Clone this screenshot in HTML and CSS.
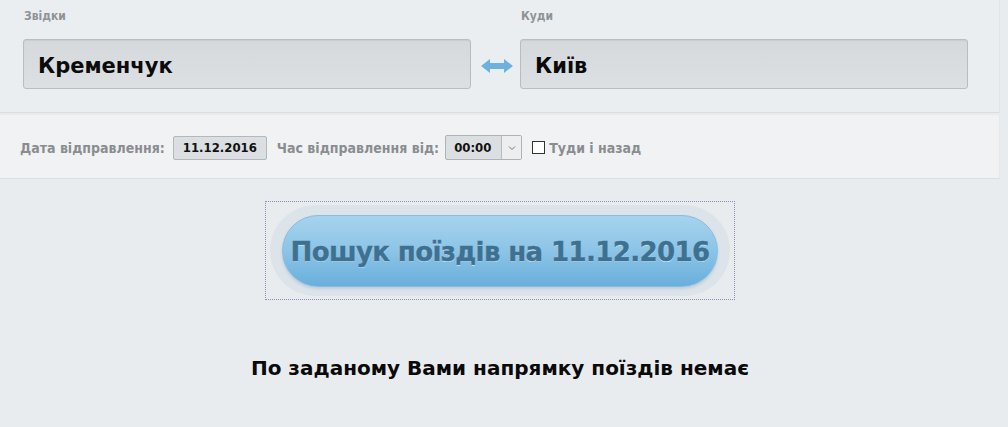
FILE: index.html
```html
<!DOCTYPE html>
<html lang="uk">
<head>
<meta charset="utf-8">
<title>Пошук поїздів</title>
<link rel="stylesheet" href="styles.css">
</head>
<body>
<div class="page">
  <div class="route">
    <div class="field">
      <div class="label">Звідки</div>
      <div class="station">Кременчук</div>
    </div>
    <div class="swap">
      <svg width="32" height="16" viewBox="0 0 32 16"><path d="M0 8 L9 1 V5 H23 V1 L32 8 L23 15 V11 H9 V15 Z" fill="#6db2de"/></svg>
    </div>
    <div class="field">
      <div class="label">Куди</div>
      <div class="station">Київ</div>
    </div>
  </div>
  <div class="options">
    <span class="opt-label">Дата відправлення:</span>
    <span class="date">11.12.2016</span>
    <span class="opt-label">Час відправлення від:</span>
    <span class="select"><span class="select-value">00:00</span><span class="select-btn"><svg width="8" height="6" viewBox="0 0 8 6"><path d="M1 1.5 L4 4.5 L7 1.5" fill="none" stroke="#777" stroke-width="1"/></svg></span></span>
    <span class="check"><span class="box"></span><span class="opt-label">Туди і назад</span></span>
  </div>
  <div class="search-wrap">
    <div class="search-focus">
      <div class="search-halo">
        <div class="search-btn">Пошук поїздів на 11.12.2016</div>
      </div>
    </div>
  </div>
  <div class="message">По заданому Вами напрямку поїздів немає</div>
</div>
</body>
</html>
```
FILE: styles.css
```css
html, body {
  margin: 0;
  padding: 0;
  background: #e9ecef;
  height: 100%;
}
body {
  font-family: "DejaVu Sans", Verdana, sans-serif;
}
.page {
  width: 1000px;
}
.route {
  display: flex;
  align-items: flex-end;
  padding: 8px 0 23px 23px;
  background: #ebeef1;
  border-right: 1px solid #e2e5e8;
  border-bottom: 1px solid #dadee1;
}
.field {
  width: 448px;
}
.label {
  font-family: "DejaVu Sans Condensed", "DejaVu Sans", sans-serif;
  font-weight: bold;
  font-size: 12px;
  color: #8f9396;
  height: 16px;
  line-height: 16px;
  padding-left: 1px;
  margin-bottom: 15px;
}
.station {
  box-sizing: border-box;
  height: 50px;
  border: 1px solid #b9bdc1;
  border-radius: 3px;
  background: linear-gradient(#d6d9dc, #dde0e3);
  box-shadow: inset 0 1px 1px rgba(0,0,0,0.06);
  font-weight: bold;
  font-size: 21px;
  line-height: 52px;
  color: #0b0b0b;
  padding-left: 14px;
}
.swap {
  width: 49px;
  height: 50px;
  display: flex;
  align-items: center;
  justify-content: center;
  padding-left: 2px;
  padding-top: 4px;
  box-sizing: border-box;
}
.options {
  display: flex;
  align-items: center;
  height: 64px;
  margin-top: 2px;
  padding-left: 20px;
  padding-top: 2px;
  background: #f1f2f4;
  border-right: 1px solid #e6e8ea;
  border-bottom: 1px solid #dcdfe2;
  box-sizing: border-box;
  font-family: "DejaVu Sans Condensed", "DejaVu Sans", sans-serif;
  font-weight: bold;
  font-size: 14px;
}
.opt-label {
  color: #8a8d90;
}
.date {
  box-sizing: border-box;
  height: 24px;
  line-height: 22px;
  margin: 0 10px 0 8px;
  padding: 0 9px;
  background: #dcdfe2;
  border: 1px solid #b3b8bc;
  border-radius: 2px;
  color: #111;
  font-size: 13px;
}
.select {
  display: flex;
  box-sizing: border-box;
  height: 25px;
  margin-left: 6px;
  border: 1px solid #aeb3b7;
  border-radius: 2px;
  background: #dcdfe2;
  color: #111;
  font-size: 13px;
}
.select-value {
  width: 55px;
  line-height: 23px;
  padding-left: 8px;
  box-sizing: border-box;
}
.select-btn {
  width: 19px;
  border-left: 1px solid #b7bbbf;
  background: #eceeef;
  display: flex;
  align-items: center;
  justify-content: center;
}
.check {
  display: flex;
  align-items: center;
  margin-left: 10px;
}
.box {
  width: 11px;
  height: 11px;
  border: 1px solid #333;
  background: #fff;
  margin-right: 4px;
}
.search-wrap {
  display: flex;
  justify-content: center;
  padding-top: 22px;
}
.search-focus {
  width: 470px;
  height: 99px;
  box-sizing: border-box;
  border: 1px dotted #8f8fb8;
  padding: 3px 4px;
}
.search-halo {
  height: 91px;
  border-radius: 46px;
  background: #dde4e9;
  display: flex;
  align-items: center;
  justify-content: center;
}
.search-btn {
  box-sizing: border-box;
  width: 436px;
  height: 72px;
  border-radius: 36px;
  border: 1px solid #86bde0;
  background: linear-gradient(#a7d3ee, #8cc4e6 50%, #69afdc);
  box-shadow: 0 2px 3px rgba(90,140,180,0.25);
  display: flex;
  align-items: center;
  justify-content: center;
  padding-top: 3px;
  font-weight: bold;
  font-size: 26px;
  letter-spacing: -0.6px;
  -webkit-text-stroke: 0.5px #3d7192;
  color: #3d7192;
  text-shadow: 0 0 1px #d5ecfa, 0 1px 0 #c5e3f5;
  white-space: nowrap;
}
.message {
  text-align: center;
  margin-top: 56px;
  font-weight: bold;
  font-size: 20px;
  color: #0a0a0a;
}
```
